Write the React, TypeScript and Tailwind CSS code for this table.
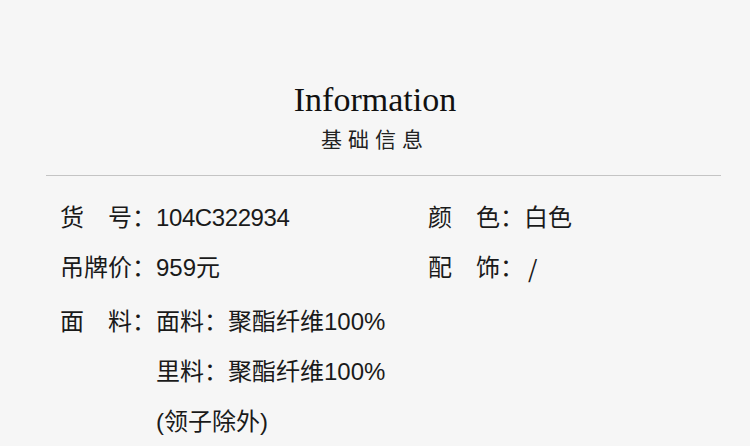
import React from "react";

const sans = "font-['Liberation_Sans','Noto_Sans_CJK_SC',sans-serif]";

function Label({ children }: { children: React.ReactNode }) {
  return <span className="w-[96px] shrink-0 whitespace-pre">{children}</span>;
}

export default function App() {
  return (
    <div className={`w-[750px] h-[446px] overflow-hidden bg-[#f6f6f6] text-[#1a1a1a] ${sans}`}>
      <div className="pt-[80px] flex flex-col items-center">
        <div className="font-['Liberation_Serif',serif] text-[34px] leading-[40px] text-[#111]">
          Information
        </div>
        <div className="mt-[4px] font-['Noto_Sans_CJK_SC',sans-serif] text-[21px] leading-[28px] tracking-[6px] text-[#222]">
          基础信息
        </div>
      </div>
      <div className="ml-[46px] w-[675px] mt-[23px] h-px bg-[#c4c4c4]" />
      <div className="mt-[17px] pl-[60px] text-[24px] leading-[50px]">
        <div className="grid grid-cols-[368px_1fr]">
          <div className="flex">
            <Label>货　号：</Label>
            <span className="tracking-[-0.4px]">104C322934</span>
          </div>
          <div className="flex">
            <Label>颜　色：</Label>
            <span>白色</span>
          </div>
          <div className="flex">
            <Label>吊牌价：</Label>
            <span>959元</span>
          </div>
          <div className="flex">
            <Label>配　饰：</Label>
            <span className="pl-[4px] font-['Noto_Sans_CJK_SC',sans-serif]">/</span>
          </div>
        </div>
        <div className="mt-[4px] flex">
          <Label>面　料：</Label>
          <div className="flex flex-col">
            <span>面料：聚酯纤维100%</span>
            <span>里料：聚酯纤维100%</span>
            <span>(领子除外)</span>
          </div>
        </div>
      </div>
    </div>
  );
}
